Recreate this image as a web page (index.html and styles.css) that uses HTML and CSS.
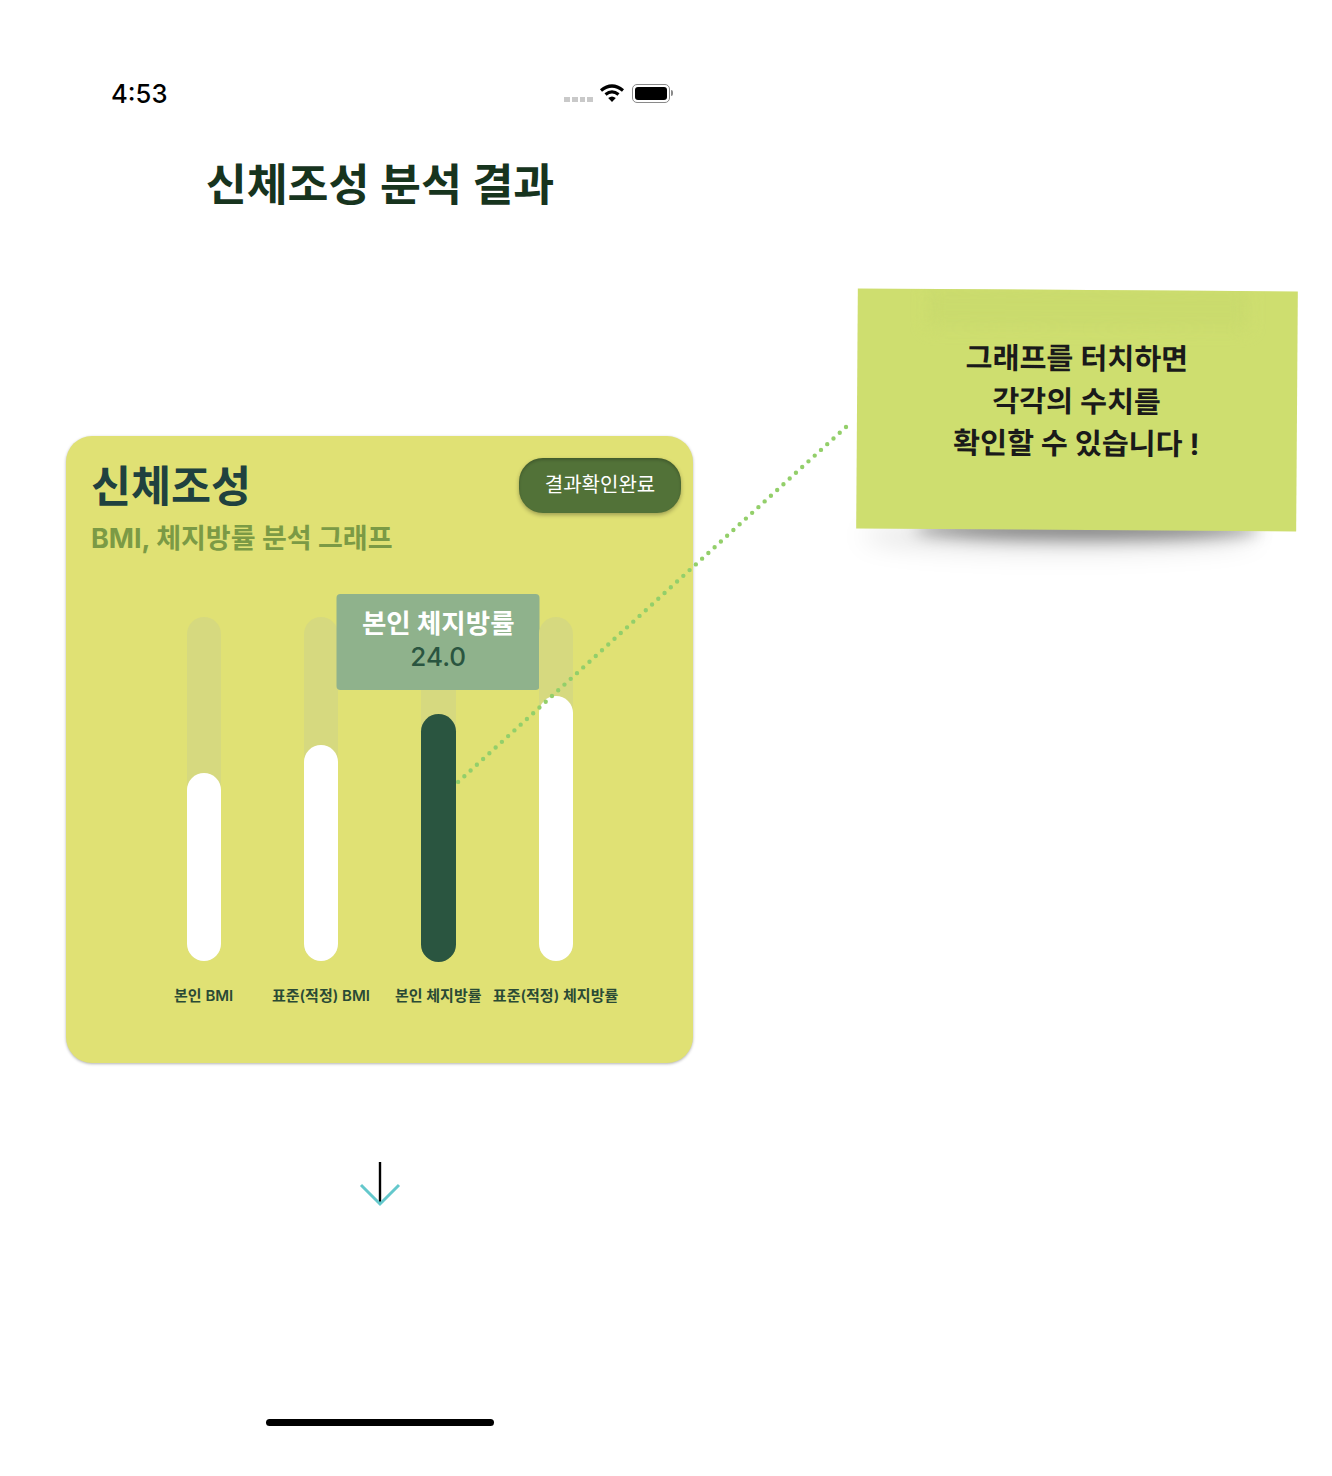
FILE: index.html
```html
<!DOCTYPE html>
<html lang="ko">
<head>
  <meta charset="utf-8">
  <title>신체조성 분석 결과</title>
  <link rel="stylesheet" href="styles.css">
</head>
<body>
  <div class="canvas">
    <div class="phone">
      <div class="status-bar">
        <span class="time">4:53</span>
        <div class="status-icons">
          <div class="signal"><i></i><i></i><i></i><i></i></div>
          <svg class="wifi" viewBox="0 0 26 20" width="26" height="20">
            <path d="M2 7.5 Q13 -1.5 24 7.5" fill="none" stroke="#000" stroke-width="3.2"/>
            <path d="M6.5 11.5 Q13 6.2 19.5 11.5" fill="none" stroke="#000" stroke-width="3.2"/>
            <path d="M9.2 15 Q13 12 16.8 15 L13 19 Z" fill="#000"/>
          </svg>
          <div class="battery"><div class="battery-level"></div></div>
          <div class="battery-nub"></div>
        </div>
      </div>

      <h1 class="page-title">신체조성 분석 결과</h1>

      <section class="card">
        <div class="card-head">
          <div>
            <h2 class="card-title">신체조성</h2>
            <p class="card-sub">BMI, 체지방률 분석 그래프</p>
          </div>
          <button class="done-btn">결과확인완료</button>
        </div>

        <div class="chart">
          <div class="bar-col">
            <div class="track"><div class="fill" style="height: 188px"></div></div>
            <span class="bar-label">본인 BMI</span>
          </div>
          <div class="bar-col">
            <div class="track"><div class="fill" style="height: 216px"></div></div>
            <span class="bar-label">표준(적정) BMI</span>
          </div>
          <div class="bar-col">
            <div class="track wide"><div class="fill dark" style="height: 248px"></div></div>
            <span class="bar-label">본인 체지방률</span>
            <div class="tooltip">
              <div class="tooltip-title">본인 체지방률</div>
              <div class="tooltip-value">24.0</div>
            </div>
          </div>
          <div class="bar-col">
            <div class="track"><div class="fill" style="height: 265px"></div></div>
            <span class="bar-label">표준(적정) 체지방률</span>
          </div>
        </div>
      </section>

      <svg class="down-arrow" viewBox="0 0 44 48" width="44" height="48">
        <path d="M22 2 L22 42" stroke="#000" stroke-width="2.4" fill="none"/>
        <path d="M3 25 L22 44 L41 25" stroke="#64c8cc" stroke-width="3" fill="none"/>
      </svg>

      <div class="home-bar"></div>
    </div>

    <!-- sticky note beside the phone -->
    <div class="note-shadow"></div>
    <div class="note-shadow soft"></div>
    <div class="note">
      <div class="note-band"></div>
      <p class="note-text">그래프를 터치하면<br>각각의 수치를<br>확인할 수 있습니다 !</p>
    </div>

    <svg class="connector" viewBox="0 0 1332 1476" width="1332" height="1476">
      <line x1="846" y1="427" x2="458" y2="782" stroke="#93cf6a" stroke-width="4.4" stroke-linecap="round" stroke-dasharray="0 8.48"/>
    </svg>
  </div>
</body>
</html>
```

FILE: styles.css
```css
* {
  box-sizing: border-box;
}
body {
  margin: 0;
  background: #fff;
  font-family: Inter, "Noto Sans CJK KR", sans-serif;
}
.canvas {
  position: relative;
  width: 1332px;
  height: 1476px;
  overflow: hidden;
}
.phone {
  width: 760px;
  display: flex;
  flex-direction: column;
  padding-top: 78px;
}
.status-bar {
  display: flex;
  justify-content: space-between;
  align-items: center;
  height: 30px;
  padding: 0 87px 0 111px;
}
.time {
  font-size: 25.6px;
  font-weight: 500;
  color: #000;
}
.status-icons {
  display: flex;
  align-items: center;
}
.signal {
  display: flex;
  gap: 2px;
  margin: 12px 6px 0 0;
}
.signal i {
  width: 5.7px;
  height: 5px;
  background: #c9c9c9;
}
.wifi {
  margin-right: 7px;
}
.battery {
  width: 38px;
  height: 19px;
  padding: 2px;
  border: 1px solid #8a8a8a;
  border-radius: 5px;
}
.battery-level {
  height: 100%;
  background: #000;
  border-radius: 3px;
}
.battery-nub {
  width: 2px;
  height: 6px;
  margin-left: 1px;
  background: #8a8a8a;
  border-radius: 0 2px 2px 0;
}
.page-title {
  margin: 41px 0 0;
  height: 72px;
  line-height: 72px;
  text-align: center;
  font-size: 44.5px;
  font-weight: 700;
  color: #17341e;
}
.card {
  margin: 215px 0 0 66px;
  width: 627px;
  height: 627px;
  background: #e0e174;
  border-radius: 26px;
  box-shadow: 0 1px 3px rgba(0, 0, 0, 0.3);
  padding: 21px 12px 0 25px;
}
.card-head {
  display: flex;
  justify-content: space-between;
  align-items: flex-start;
  height: 160px;
}
.card-title {
  margin: 2px 0 0;
  font-size: 43.5px;
  line-height: 54px;
  font-weight: 700;
  color: #20413f;
}
.card-sub {
  margin: 8px 0 0;
  font-size: 27px;
  line-height: 36px;
  font-weight: 700;
  color: #7b9a45;
}
.done-btn {
  width: 162px;
  height: 55px;
  margin-top: 1px;
  padding-bottom: 5px;
  border: none;
  border-radius: 24px;
  background: #527238;
  color: #fff;
  font-family: inherit;
  font-size: 20px;
  box-shadow: 0 2px 4px rgba(0, 0, 0, 0.3), inset 0 2px 3px rgba(0, 0, 0, 0.2);
}
.chart {
  display: grid;
  grid-template-columns: repeat(4, 117.3px);
  margin-left: 54px;
}
.bar-col {
  position: relative;
  display: flex;
  flex-direction: column;
  align-items: center;
}
.track {
  position: relative;
  width: 34px;
  height: 344px;
  background: #d6d97f;
  border-radius: 17px;
}
.track.wide {
  width: 35px;
}
.fill {
  position: absolute;
  left: 0;
  right: 0;
  bottom: 0;
  background: #fff;
  border-radius: 17px;
}
.fill.dark {
  bottom: -1px;
  background: #2a5540;
  border-radius: 18px;
}
.bar-label {
  margin-top: 24px;
  font-size: 15px;
  line-height: 22px;
  font-weight: 600;
  color: #2a4a35;
  white-space: nowrap;
}
.tooltip {
  position: absolute;
  top: -23px;
  left: 50%;
  transform: translateX(-50%);
  width: 203px;
  height: 96px;
  padding-top: 10px;
  background: #8fb28c;
  border-radius: 4px;
  text-align: center;
}
.tooltip-title {
  font-size: 26.5px;
  line-height: 38px;
  font-weight: 700;
  color: #fff;
}
.tooltip-value {
  font-size: 26px;
  line-height: 30px;
  font-weight: 500;
  color: #2a5540;
}
.down-arrow {
  margin: 97px 0 0 358px;
}
.home-bar {
  width: 228px;
  height: 7px;
  margin: 211px 0 0 266px;
  background: #000;
  border-radius: 4px;
}
/* note and its shadow sit on the free canvas, next to the phone */
.note {
  position: absolute;
  left: 857px;
  top: 290px;
  width: 440px;
  height: 240px;
  background: #cede6f;
  transform: rotate(0.4deg);
  overflow: hidden;
}
.note-band {
  position: absolute;
  left: 70px;
  top: -2px;
  width: 320px;
  height: 40px;
  background: #cadb6d;
  filter: blur(8px);
}
.note-text {
  position: relative;
  margin: 0;
  padding: 48px 1px 0 0;
  text-align: center;
  font-size: 29.3px;
  line-height: 42.5px;
  font-weight: 700;
  color: #1a1a1a;
}
.note-shadow {
  position: absolute;
  left: 915px;
  top: 518px;
  width: 345px;
  height: 22px;
  background: rgba(0, 0, 0, 0.42);
  border-radius: 50%;
  filter: blur(8px);
}
.note-shadow.soft {
  left: 862px;
  top: 520px;
  width: 395px;
  height: 32px;
  background: rgba(0, 0, 0, 0.1);
  filter: blur(12px);
}
.connector {
  position: absolute;
  left: 0;
  top: 0;
  pointer-events: none;
}
```
